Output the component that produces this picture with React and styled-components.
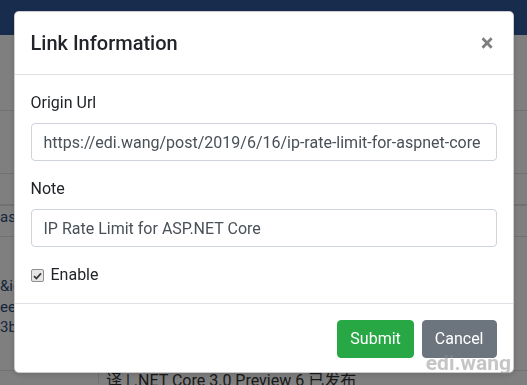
import React from "react";
import styled, { createGlobalStyle } from "styled-components";

const GlobalStyle = createGlobalStyle`
  html, body { margin: 0; padding: 0; overflow: hidden; }
  body {
    font-family: Roboto, "Noto Sans CJK SC", sans-serif;
    font-size: 16px;
    line-height: 1.5;
    color: #212529;
    background: #fff;
  }
  * { box-sizing: border-box; }
`;

const Page = styled.div`
  width: 527px;
  height: 385px;
  overflow: hidden;
  background: #fff;
`;

const Navbar = styled.header`
  height: 35px;
  background: #30589c;
`;

const Row = styled.div`
  height: ${p => p.$h}px;
  border-bottom: ${p => p.$b || 1}px solid #dee2e6;
  display: flex;
  overflow: hidden;
`;

const Cell = styled.div`
  padding: ${p => p.$pad || "0"};
  font-family: Roboto, "Noto Sans CJK SC", sans-serif;
  font-size: ${p => p.$fs || 15}px;
  line-height: 20.5px;
  color: ${p => p.$c || "#2a4d7a"};
  white-space: nowrap;
  border-left: ${p => (p.$bordered ? "1px solid #dee2e6" : "none")};
  width: ${p => p.$w || "auto"};
`;

const Backdrop = styled.div`
  position: fixed;
  inset: 0;
  background: rgba(0, 0, 0, 0.5);
  display: flex;
  justify-content: center;
  align-items: flex-start;
  padding-top: 11px;
`;

const Modal = styled.div`
  width: 500px;
  background: #fff;
  border: 1px solid rgba(0, 0, 0, 0.2);
  border-radius: 5px;
  box-shadow: 0 2px 6px rgba(0, 0, 0, 0.15);
  display: flex;
  flex-direction: column;
`;

const Header = styled.div`
  display: flex;
  align-items: flex-start;
  justify-content: space-between;
  padding: 16px;
  border-bottom: 1px solid #dee2e6;
`;

const Title = styled.h5`
  margin: 0;
  font-size: 20px;
  font-weight: 500;
  line-height: 30px;
  color: #212529;
`;

const Close = styled.button`
  border: 0;
  background: transparent;
  padding: 0 3px 0 0;
  margin: 0;
  font-family: Roboto, sans-serif;
  font-size: 24px;
  font-weight: 700;
  line-height: 30px;
  color: #000;
  opacity: 0.5;
  text-shadow: 0 1px 0 #fff;
  cursor: pointer;
`;

const Body = styled.div`
  padding: 16px;
`;

const Group = styled.div`
  margin-bottom: 16px;
`;

const Label = styled.label`
  display: block;
  margin-bottom: 8px;
  line-height: 24px;
  color: #212529;
`;

const Input = styled.input`
  display: block;
  width: 100%;
  height: 38px;
  padding: 6px 12px;
  font-family: Roboto, sans-serif;
  font-size: 16px;
  line-height: 24px;
  color: #495057;
  background: #fff;
  border: 1px solid #ced4da;
  border-radius: 4px;
  outline: none;
`;

const Check = styled.label`
  display: flex;
  align-items: center;
  gap: 7px;
  line-height: 24px;
  color: #212529;
`;

const Box = styled.span`
  width: 13px;
  height: 13px;
  border: 1px solid #8f8f8f;
  border-radius: 2px;
  background: #e6e6e6;
  display: inline-flex;
  align-items: center;
  justify-content: center;
  margin-top: 1px;
`;

const Footer = styled.div`
  display: flex;
  justify-content: flex-end;
  align-items: center;
  gap: 8px;
  padding: 16px 16px 14px;
  border-top: 1px solid #dee2e6;
`;

const Button = styled.button`
  font-family: Roboto, sans-serif;
  font-size: 16px;
  line-height: 24px;
  padding: 6px 12px;
  border: 1px solid ${p => p.$bg};
  border-radius: 4px;
  background: ${p => p.$bg};
  color: #fff;
  cursor: pointer;
`;

const Watermark = styled.div`
  position: fixed;
  right: 16px;
  bottom: 10px;
  font-family: Roboto, sans-serif;
  font-size: 21px;
  font-weight: 700;
  line-height: 24px;
  color: rgba(140, 140, 140, 0.5);
  pointer-events: none;
`;

export default function App() {
  return (
    <>
      <GlobalStyle />
      <Page>
        <Navbar />
        <Row $h={76} />
        <Row $h={63} />
        <Row $h={32} $b={2} />
        <Row $h={31}>
          <Cell $pad="1px 0 0 0">aspnet-core-rate-limit</Cell>
        </Row>
        <Row $h={134}>
          <Cell $pad="39px 0 0 0">
            &amp;id=47<br />ee2a9c1<br />3bf80d4
          </Cell>
        </Row>
        <Row $h={40}>
          <Cell $w="98px" />
          <Cell $bordered $pad="0 0 0 7px" $c="#333" $fs={16}>
            译 | .NET Core 3.0 Preview 6 已发布
          </Cell>
        </Row>
      </Page>
      <Backdrop>
        <Modal>
          <Header>
            <Title>Link Information</Title>
            <Close aria-label="Close">×</Close>
          </Header>
          <Body>
            <Group>
              <Label>Origin Url</Label>
              <Input readOnly value="https://edi.wang/post/2019/6/16/ip-rate-limit-for-aspnet-core" />
            </Group>
            <Group>
              <Label>Note</Label>
              <Input readOnly value="IP Rate Limit for ASP.NET Core" />
            </Group>
            <Check>
              <Box>
                <svg width="9" height="8" viewBox="0 0 9 8">
                  <path d="M1 4.2 L3.4 6.5 L8 1.3" fill="none" stroke="#3a3a3a" strokeWidth="1.8" />
                </svg>
              </Box>
              Enable
            </Check>
          </Body>
          <Footer>
            <Button $bg="#28a745">Submit</Button>
            <Button $bg="#6c757d">Cancel</Button>
          </Footer>
        </Modal>
      </Backdrop>
      <Watermark>edi.wang</Watermark>
    </>
  );
}
